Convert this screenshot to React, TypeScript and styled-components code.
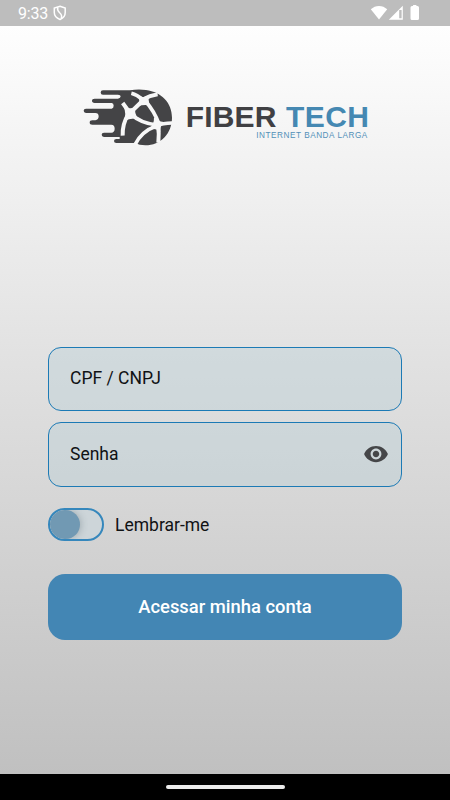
import React, { useState } from "react";
import styled, { createGlobalStyle } from "styled-components";

const GlobalStyle = createGlobalStyle`
  * { box-sizing: border-box; }
  html, body { margin: 0; padding: 0; }
  body { font-family: Roboto, "Liberation Sans", sans-serif; }
  button, input { font: inherit; color: inherit; }
`;

const Screen = styled.div`
  width: 450px;
  height: 800px;
  display: flex;
  flex-direction: column;
  overflow: hidden;
`;

const StatusBar = styled.header`
  height: 26px;
  padding: 0 30px 0 18px;
  display: flex;
  justify-content: space-between;
  background: #bdbdbd;
  color: #fff;
`;

const Clock = styled.div`
  display: flex;
  font-size: 16px;
  line-height: 27px;
  letter-spacing: -0.2px;
`;

const ShieldIcon = styled.svg`
  width: 14px;
  height: 16px;
  margin: 5px 0 0 5px;
`;

const StatusIcons = styled.svg`
  width: 50px;
  height: 26px;
`;

const Content = styled.main`
  flex: 1;
  padding: 54px 48px 0;
  display: flex;
  flex-direction: column;
  background: linear-gradient(180deg, #fefefe 0%, #dedede 50%, #c0c0c0 100%);
`;

const Logo = styled.svg`
  width: 300px;
  height: 75px;
  margin-left: 27px;
  flex: none;
`;

const Form = styled.form`
  margin-top: 191.5px;
  display: flex;
  flex-direction: column;
`;

const Field = styled.label`
  height: 64.5px;
  margin-bottom: 11px;
  padding: 0 12px 0 21px;
  display: flex;
  align-items: center;
  border: 1px solid #1c7ab5;
  border-radius: 13px;
  background: rgba(188, 208, 215, 0.45);
`;

const Input = styled.input`
  flex: 1;
  min-width: 0;
  padding: 0 0 1px;
  border: 0;
  outline: 0;
  background: transparent;
  font-size: 17.5px;
  &::placeholder { color: #101214; opacity: 1; }
`;

const EyeButton = styled.button`
  width: 26px;
  height: 26px;
  padding: 0;
  border: 0;
  background: none;
  svg { display: block; }
`;

const Remember = styled.div`
  height: 33px;
  margin-top: 10.5px;
  display: flex;
  align-items: center;
  gap: 11px;
  color: #101214;
  font-size: 17.5px;
`;

const Toggle = styled.button<{ $on: boolean }>`
  width: 56px;
  height: 33px;
  padding: 0;
  display: flex;
  justify-content: ${(p) => (p.$on ? "flex-end" : "flex-start")};
  overflow: hidden;
  border: 2px solid #3587bc;
  border-radius: 17px;
  background: #cdd5d9;
`;

const Knob = styled.span`
  width: 30px;
  height: 29px;
  border-radius: 15px;
  background: #7199b3;
  box-shadow: 1px 0 7px rgba(60, 80, 90, 0.3);
`;

const Submit = styled.button`
  height: 66px;
  margin-top: 32.5px;
  padding: 0;
  border: 0;
  border-radius: 17px;
  background: #4386b4;
  color: #fff;
  font-size: 18.4px;
  font-weight: 500;
`;

const NavBar = styled.footer`
  height: 26px;
  display: flex;
  justify-content: center;
  padding-top: 11px;
  background: #000;
`;

const HomeHandle = styled.span`
  width: 119px;
  height: 4px;
  border-radius: 2px;
  background: #ececec;
`;

function BrandLogo() {
  return (
    <Logo viewBox="0 0 300 75" role="img" aria-label="Fiber Tech">
      <g transform="scale(.33333)">
        <path
          fill="#444446"
          d="M84 31H165Q188 27 213 30C259 36 291 68 291 113C291 160 257 196 211 196Q193 196 180 189H124Q117 189 117 183Q117 177 124 177H134V171H87Q80 171 80 164.500Q80 158 87 158H109Q119 157 119 146Q119 134 109 134H52Q44 134 44 127.500Q44 121 52 121H61Q71 119 71 109Q71 99 61 99H33Q26 99 26 92.500Q26 86 33 86H110Q116 84 116 77Q116 69 110 69H59Q51 69 51 62.500Q51 56 59 56H129Q137 54 137 49Q137 44 129 44H84Q77 44 77 37.500Q77 31 84 31Z"
        />
        <g fill="none" stroke="#f7f7f7" strokeLinejoin="round">
          <path strokeWidth="11" d="M169 40C181 43 193 50 203 59C216 51 230 45 248 43" />
          <path strokeWidth="12" d="M202 63L165 99L143 69M160 102C149 120 142 140 143 167" />
          <path strokeWidth="11" d="M166 101C186 120 214 132 246 135M211 63C229 83 242 105 252 132" />
          <path strokeWidth="11" d="M291 129C272 129 257 132 244 138C216 148 193 167 180 194" />
          <path strokeWidth="12" d="M249 136C252 153 252 169 250 188" />
        </g>
        <path
          fill="#f7f7f7"
          d="M188 46L205 52L224 45Q217 60 226 77Q208 72 189 79Q197 62 188 46ZM146 80Q163 89 182 82Q176 97 190 117Q168 112 147 124Q155 101 146 80ZM237 112Q248 125 266 126Q255 139 256 156Q240 142 222 148Q238 133 237 112Z"
        />
      </g>
      <g fontFamily='"Liberation Sans", sans-serif'>
        <g fontSize="30" fontWeight="700">
          <text x="110.800" y="47.400" fill="#404043" textLength="90.500">FIBER</text>
          <text x="211" y="47.400" fill="#4588b2" textLength="83">TECH</text>
        </g>
        <text x="181.300" y="58.400" fontSize="8.200" fill="#5290b8" textLength="111">
          INTERNET BANDA LARGA
        </text>
      </g>
    </Logo>
  );
}

export default function App() {
  const [remember, setRemember] = useState(false);
  const [visible, setVisible] = useState(false);

  return (
    <>
      <GlobalStyle />
      <Screen>
        <StatusBar>
          <Clock>
            9:33
            <ShieldIcon viewBox="0 0 14 16" fill="none" stroke="#fff" strokeWidth="1.500">
              <path d="M7 1.300L12.200 3V7.500C12.200 11 10 13.300 7 14.500C4 13.300 1.300 11 1.300 7.500V3Z" />
              <path d="M4.800 2.300C2.800 8.500 10.800 7 8.200 13.500" />
            </ShieldIcon>
          </Clock>
          <StatusIcons viewBox="0 0 50 26" fill="#fff">
            <path d="M.8 9.300C5.300 4.800 12.700 4.800 17.200 9.300L9 19.500Z" />
            <path fillRule="evenodd" d="M32.800 5.700V19.700H18.800ZM31.600 10H29.200V18.200H31.600Z" />
            <path d="M42 6H43V5.500Q43 5 43.500 5H46Q46.500 5 46.500 5.500V6H47.500Q49 6 49 7.500V18.500Q49 20 47.500 20H42Q40.500 20 40.500 18.500V7.500Q40.500 6 42 6Z" />
          </StatusIcons>
        </StatusBar>
        <Content>
          <BrandLogo />
          <Form onSubmit={(e) => e.preventDefault()}>
            <Field>
              <Input placeholder="CPF / CNPJ" />
            </Field>
            <Field>
              <Input placeholder="Senha" type={visible ? "text" : "password"} />
              <EyeButton type="button" aria-label="Mostrar senha" onClick={() => setVisible(!visible)}>
                <svg viewBox="0 0 24 24" width="26" height="26" fill="#454648">
                  <path d="M12 4.500C7 4.500 2.730 7.610 1 12c1.730 4.390 6 7.500 11 7.500s9.270-3.110 11-7.500c-1.730-4.390-6-7.500-11-7.500zM12 17c-2.760 0-5-2.240-5-5s2.240-5 5-5 5 2.240 5 5-2.240 5-5 5zm0-8c-1.660 0-3 1.340-3 3s1.340 3 3 3 3-1.340 3-3-1.340-3-3-3z" />
                </svg>
              </EyeButton>
            </Field>
            <Remember>
              <Toggle
                type="button"
                role="switch"
                aria-checked={remember}
                aria-label="Lembrar-me"
                $on={remember}
                onClick={() => setRemember(!remember)}
              >
                <Knob />
              </Toggle>
              <span>Lembrar-me</span>
            </Remember>
            <Submit type="submit">Acessar minha conta</Submit>
          </Form>
        </Content>
        <NavBar>
          <HomeHandle />
        </NavBar>
      </Screen>
    </>
  );
}
